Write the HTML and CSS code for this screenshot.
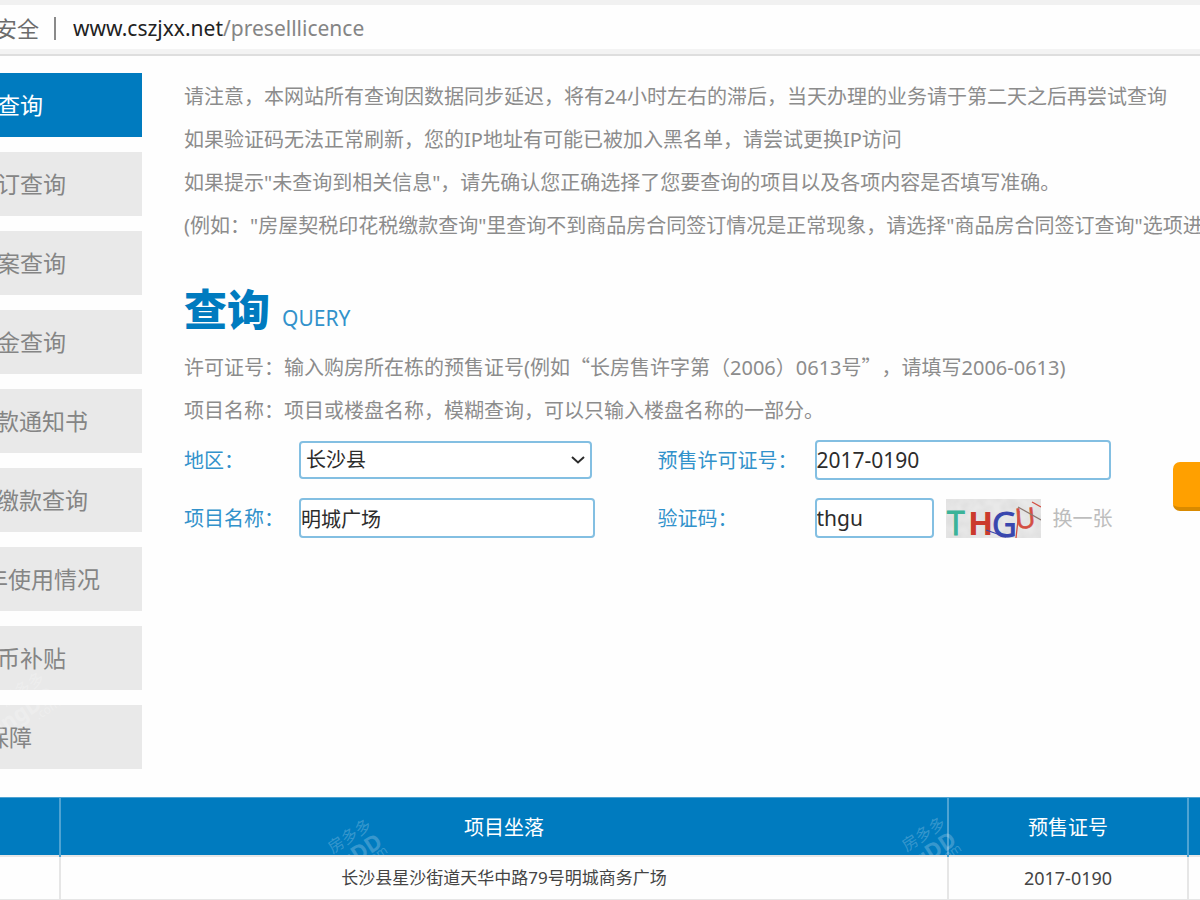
FILE: index.html
```html
<!DOCTYPE html>
<html lang="zh-CN">
<head>
<meta charset="utf-8">
<title>预售许可证查询</title>
<link rel="stylesheet" href="styles.css">
</head>
<body>
<header class="address-bar">
  <span class="address-security">安全</span>
  <span class="address-divider"></span>
  <span class="address-url">www.cszjxx.net<span class="address-path">/preselllicence</span></span>
</header>
<div class="layout">
  <nav class="side-nav">
    <a class="side-link side-link-active end-2" href="#">查询</a>
    <a class="side-link end-3" href="#">订查询</a>
    <a class="side-link end-3" href="#">案查询</a>
    <a class="side-link end-3" href="#">金查询</a>
    <a class="side-link end-4" href="#">款通知书</a>
    <a class="side-link end-4" href="#">缴款查询</a>
    <a class="side-link end-5" href="#">年使用情况</a>
    <a class="side-link end-3" href="#">币补贴</a>
    <a class="side-link end-1" href="#">保障</a>
    <div class="watermark watermark-side" aria-hidden="true"><span>房多多</span><b>fangDD</b><i>.com</i></div>
  </nav>
  <main class="content">
    <div class="notes">
      <p>请注意，本网站所有查询因数据同步延迟，将有24小时左右的滞后，当天办理的业务请于第二天之后再尝试查询</p>
      <p>如果验证码无法正常刷新，您的IP地址有可能已被加入黑名单，请尝试更换IP访问</p>
      <p>如果提示"未查询到相关信息"，请先确认您正确选择了您要查询的项目以及各项内容是否填写准确。</p>
      <p>(例如："房屋契税印花税缴款查询"里查询不到商品房合同签订情况是正常现象，请选择"商品房合同签订查询"选项进</p>
    </div>
    <h1 class="title">查询<span class="title-en">QUERY</span></h1>
    <div class="notes">
      <p>许可证号：输入购房所在栋的预售证号(例如<span class="quote">“</span>长房售许字第（2006）0613号<span class="quote">”</span>，请填写2006-0613)</p>
      <p>项目名称：项目或楼盘名称，模糊查询，可以只输入楼盘名称的一部分。</p>
    </div>
    <form class="query-form">
      <div class="fields">
        <label for="area">地区：</label>
        <span class="select-wrap">
          <select id="area" class="field"><option>长沙县</option></select>
          <svg class="chevron" viewBox="0 0 14 8" aria-hidden="true"><path d="M1 1l6 5.5L13 1"/></svg>
        </span>
        <label for="licence">预售许可证号：</label>
        <input id="licence" class="field field-latin" type="text" value="2017-0190">
        <label for="project">项目名称：</label>
        <input id="project" class="field" type="text" value="明城广场">
        <label for="code">验证码：</label>
        <div class="captcha">
          <input id="code" class="field field-latin field-code" type="text" value="thgu">
          <svg class="captcha-image" viewBox="0 0 95 39" role="img" aria-label="验证码图片">
            <defs>
              <filter id="cloud"><feTurbulence type="fractalNoise" baseFrequency="0.09" numOctaves="2"/><feColorMatrix values="0 0 0 0 .6  0 0 0 0 .6  0 0 0 0 .6  .7 0 0 0 -.2"/></filter>
            </defs>
            <rect width="95" height="39" fill="#e9e9e9"/>
            <rect width="95" height="39" filter="url(#cloud)"/>
            <text x="1" y="36" font-size="32" fill="#3bb398" stroke="#3bb398">T</text>
            <text x="22" y="36" font-size="33" font-weight="700" fill="#cb3a2c">H</text>
            <text x="46" y="38" font-size="34" fill="#3947ae" stroke="#3947ae">G</text>
            <text x="69" y="29" font-size="28" fill="#d34f43" stroke="#d34f43" stroke-width=".6" transform="rotate(-5 81 18)">U</text>
            <path d="M72 8l23 13" stroke="#8a7770" stroke-width="1.2"/>
            <path d="M86 3l9 5M73 12l-3 27" stroke="#d34f43" stroke-width="1.3"/>
            <path d="M40 31l20 7" stroke="#3947ae" stroke-width="1.3"/>
          </svg>
          <a class="refresh" href="#">换一张</a>
        </div>
      </div>
      <button class="submit" type="submit" aria-label="查询"></button>
    </form>
  </main>
</div>
<div class="results">
  <table class="result-table">
    <colgroup><col class="col-first"><col class="col-place"><col class="col-licence"><col></colgroup>
    <thead><tr><th></th><th>项目坐落</th><th>预售证号</th><th></th></tr></thead>
    <tbody><tr><td></td><td>长沙县星沙街道天华中路79号明城商务广场</td><td class="number">2017-0190</td><td></td></tr></tbody>
  </table>
  <div class="watermark-layer" aria-hidden="true">
    <div class="watermark watermark-left"><span>房多多</span><b>fangDD</b><i>.com</i></div>
    <div class="watermark watermark-right"><span>房多多</span><b>fangDD</b><i>.com</i></div>
  </div>
</div>
</body>
</html>
```
FILE: styles.css
```css
* {
  box-sizing: border-box;
}

body {
  margin: 0;
  overflow-x: hidden;
  background: #fefefe;
  color: #8c8c8c;
  font: 20px/43px "Noto Sans", "Noto Sans CJK SC", sans-serif;
  text-spacing-trim: space-all;
}

a {
  color: inherit;
  text-decoration: none;
}

p {
  margin: 0;
}

.address-bar {
  display: flex;
  align-items: center;
  height: 56px;
  border-top: 5px solid #f1f1f1;
  border-bottom: 2px solid #dedede;
  box-shadow: inset 0 -5px #f3f3f3;
  padding-bottom: 3px;
  color: #6c6c6c;
  font-size: 21px;
  line-height: 30px;
  white-space: nowrap;
}

.address-security {
  margin-left: -5px;
  font-size: 22px;
}

.address-divider {
  width: 2px;
  height: 23px;
  margin: 0 17px 0 15px;
  background: #8a8a8a;
}

.address-url {
  color: #222;
}

.address-path {
  color: #858585;
}

.layout {
  display: flex;
  gap: 42px;
  padding-top: 17px;
}

.side-nav {
  position: relative;
  display: flex;
  flex: none;
  flex-direction: column;
  gap: 15px;
  width: 142px;
  overflow: hidden;
}

.side-link {
  display: flex;
  align-items: center;
  justify-content: flex-end;
  height: 64px;
  background: #e9e9e9;
  color: #858585;
  font-size: 23px;
  white-space: nowrap;
}

.side-link-active {
  background: #007bbf;
  color: #fff;
}

.end-1 { padding-right: 110px; }
.end-2 { padding-right: 99px; }
.end-3 { padding-right: 76px; }
.end-4 { padding-right: 54px; }
.end-5 { padding-right: 42px; }

.content {
  flex: 1;
  min-width: 0;
  padding-top: 2px;
}

.notes {
  white-space: nowrap;
}

.quote {
  font-family: "Noto Sans CJK SC", sans-serif;
}

.title {
  display: flex;
  align-items: baseline;
  gap: 12px;
  margin: 36px 0 0;
  color: #007bbf;
  font-size: 43px;
  font-weight: 900;
  line-height: 54px;
}

.title-en {
  color: #3292cb;
  font-size: 21px;
  font-weight: 400;
}

.query-form {
  display: flex;
  padding-top: 8px;
}

.fields {
  display: grid;
  flex: 1;
  grid-template-columns: 115px minmax(0, 1fr) 157px minmax(0, 1fr);
  grid-auto-rows: 40px;
  row-gap: 18px;
  align-items: center;
  color: #3292cb;
}

.field {
  width: 296px;
  height: 40px;
  padding: 0;
  border: 2px solid #83bfe2;
  border-radius: 4px;
  background: #fff;
  color: #2c2c2c;
  font: inherit;
  line-height: 30px;
}

.field-latin {
  font-size: 21px;
}

.select-wrap {
  position: relative;
  width: 293px;
  height: 38px;
}

.select-wrap .field {
  display: block;
  width: 100%;
  height: 100%;
  padding-left: 5px;
  appearance: none;
}

.chevron {
  position: absolute;
  top: 15px;
  right: 7px;
  width: 14px;
  height: 8px;
  fill: none;
  stroke: #2c2c2c;
  stroke-width: 2;
}

.captcha {
  display: flex;
  align-items: center;
  white-space: nowrap;
}

.field-code {
  width: 119px;
}

.captcha-image {
  width: 95px;
  height: 39px;
  margin: 0 12px;
  font-family: "Open Sans", sans-serif;
}

.refresh {
  color: #bdbdbd;
}

.submit {
  flex: none;
  width: 150px;
  height: 49px;
  margin: 22px -123px 0 0;
  border: 0;
  border-bottom: 4px solid #d98a00;
  border-radius: 7px;
  background: #ffa000;
}

.results {
  position: relative;
  margin-top: 28px;
}

.result-table {
  width: 100%;
  border-collapse: collapse;
  table-layout: fixed;
  line-height: 24px;
}

.col-first { width: 5%; }
.col-place { width: 74%; }
.col-licence { width: 20%; }

.result-table th {
  height: 58px;
  padding: 4px 0 0;
  border: 2px solid #4fa3d2;
  border-width: 1px 2px;
  background: #007bbf;
  color: #fff;
  font-weight: 400;
}

.result-table td {
  height: 44px;
  padding: 0;
  border: 2px solid #e6e6e6;
  color: #444;
  font-size: 17px;
  text-align: center;
}

.result-table .number {
  font-size: 18px;
}

.result-table tr > :first-child {
  border-left: 0;
}

.result-table tr > :last-child {
  border-right: 0;
}

.watermark-layer {
  position: absolute;
  inset: 0 0 auto;
  height: 58px;
  overflow: hidden;
  pointer-events: none;
}

.watermark {
  position: absolute;
  color: rgba(255, 255, 255, 0.22);
  font-size: 16px;
  line-height: 18px;
  text-align: right;
  transform: rotate(-33deg);
}

.watermark span,
.watermark b,
.watermark i {
  display: block;
}

.watermark b {
  font-size: 22px;
}

.watermark i {
  font-size: 12px;
  font-style: normal;
  line-height: 8px;
}

.watermark-left { left: 301px; top: 37px; }
.watermark-right { left: 875px; top: 35px; }
.watermark-side { left: -26px; top: 614px; }
```
